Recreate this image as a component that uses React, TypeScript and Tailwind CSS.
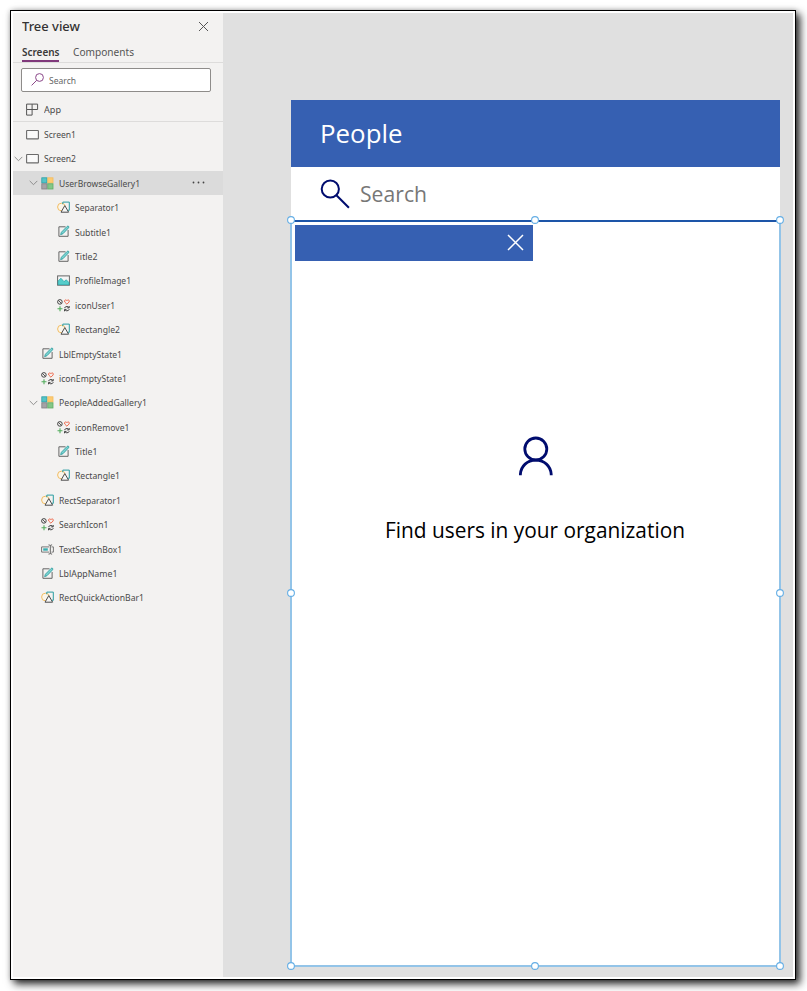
import React from "react";

type Kind = "app" | "screen" | "gallery" | "shape" | "label" | "image" | "icons" | "input";

interface Node {
  name: string;
  kind: Kind;
  depth: 0 | 1 | 2;
  open?: boolean;
  selected?: boolean;
  ruled?: boolean;
  width: string;
}

const nodes: Node[] = [
  { name: "App", kind: "app", depth: 0, ruled: true, width: "w-[17px]" },
  { name: "Screen1", kind: "screen", depth: 0, width: "w-[32px]" },
  { name: "Screen2", kind: "screen", depth: 0, open: true, width: "w-[32px]" },
  { name: "UserBrowseGallery1", kind: "gallery", depth: 1, open: true, selected: true, width: "w-[81px]" },
  { name: "Separator1", kind: "shape", depth: 2, width: "w-[44px]" },
  { name: "Subtitle1", kind: "label", depth: 2, width: "w-[36px]" },
  { name: "Title2", kind: "label", depth: 2, width: "w-[22.5px]" },
  { name: "ProfileImage1", kind: "image", depth: 2, width: "w-[56px]" },
  { name: "iconUser1", kind: "icons", depth: 2, width: "w-[40px]" },
  { name: "Rectangle2", kind: "shape", depth: 2, width: "w-[45px]" },
  { name: "LblEmptyState1", kind: "label", depth: 1, width: "w-[63px]" },
  { name: "iconEmptyState1", kind: "icons", depth: 1, width: "w-[68px]" },
  { name: "PeopleAddedGallery1", kind: "gallery", depth: 1, open: true, width: "w-[88px]" },
  { name: "iconRemove1", kind: "icons", depth: 2, width: "w-[54.5px]" },
  { name: "Title1", kind: "label", depth: 2, width: "w-[22.5px]" },
  { name: "Rectangle1", kind: "shape", depth: 2, width: "w-[45px]" },
  { name: "RectSeparator1", kind: "shape", depth: 1, width: "w-[62px]" },
  { name: "SearchIcon1", kind: "icons", depth: 1, width: "w-[49.5px]" },
  { name: "TextSearchBox1", kind: "input", depth: 1, width: "w-[63px]" },
  { name: "LblAppName1", kind: "label", depth: 1, width: "w-[58.5px]" },
  { name: "RectQuickActionBar1", kind: "shape", depth: 1, width: "w-[85px]" },
];

const indent = { 0: "pl-0", 1: "pl-[15.3px]", 2: "pl-[30.6px]" };

function NodeIcon({ kind }: { kind: Kind }) {
  return (
    <svg className="h-[13px] w-[13px] shrink-0" viewBox="0 0 13 13" fill="none">
      {kind === "app" && (
        <path d="M.6 1.1h11v5.4H.6zM6.1 1.1v11H.6V6.5" stroke="#555" strokeWidth="1" />
      )}
      {kind === "screen" && <rect x=".6" y="2.5" width="11.8" height="8.4" rx=".5" fill="#fafafa" stroke="#6b6b6b" strokeWidth="1.1" />}
      {kind === "gallery" && (
        <>
          <rect x=".8" y=".8" width="5.2" height="5.2" fill="#55c4c6" stroke="#2a9ea3" strokeWidth=".8" />
          <rect x="6.8" y=".8" width="5.2" height="5.2" fill="#fdcb72" stroke="#f3bb5e" strokeWidth=".8" />
          <rect x=".8" y="6.8" width="5.2" height="5.2" fill="#a5a3a6" stroke="#838186" strokeWidth=".8" />
          <rect x="6.8" y="6.8" width="5.2" height="5.2" fill="#84c787" stroke="#5fac64" strokeWidth=".8" />
        </>
      )}
      {kind === "shape" && (
        <>
          <circle cx="4.4" cy="6" r="3.8" fill="#faf5ea" stroke="#f2bd62" />
          <path d="M5.8 3.2V1.1h6.5v8.2h-1.5" stroke="#299da2" />
          <path d="M7.8 4.6 11.6 11.2H4z" fill="#f7f7f7" stroke="#4c4c4c" strokeLinejoin="round" />
        </>
      )}
      {kind === "label" && (
        <>
          <path d="M8.5 1.8H1.9v9.5h9.2V5" stroke="#666" />
          <path d="m3.6 9.7.8-2.5L10 1.5q1-.8 1.6-.2t-.1 1.6L6 8.7z" fill="#7bd3d2" stroke="#2a9899" strokeWidth=".8" />
        </>
      )}
      {kind === "image" && (
        <>
          <rect x=".6" y="1.9" width="11.8" height="9.3" fill="#f5f5f5" stroke="#666" />
          <path d="M1.1 7 3.9 4.2 7 7.6l2.3-1.8L12 8.6v2.1H1.1z" fill="#55cdca" stroke="#21a4a8" strokeWidth=".7" />
        </>
      )}
      {kind === "icons" && (
        <>
          <circle cx="2.9" cy="2.9" r="2.3" stroke="#444" />
          <path d="m1.3 1.3 3.2 3.2" stroke="#444" strokeWidth=".9" />
          <path d="M9.9 5.2 7.7 3Q7.1 1 8.7 .9q.9 0 1.2.8.4-.8 1.3-.8 1.5.1 1 2z" stroke="#ef6a4d" />
          <path d="M3 7.2v5M.5 9.7h5" stroke="#52ac5c" strokeWidth="1.1" />
          <path d="M7.5 9.1q.5-1.6 2.5-1.6 1.2.1 1.9 1M12.2 7v1.9h-2M12.3 10.2q-.6 1.7-2.5 1.6-1.1 0-1.8-.9M7.5 12.3v-1.9h2" stroke="#444" strokeWidth="1" />
        </>
      )}
      {kind === "input" && (
        <>
          <path d="M8 3.9H.6v5.2H8M10.5 3.9h1.9v5.2h-1.9" stroke="#777" />
          <path d="M2.2 5.3h4.6v2.4H2.2z" fill="#39aeb0" />
          <path d="M7.5 1.9q1.8 0 1.8.8v7.6q0 .8-1.8.8M11.1 1.9q-1.8 0-1.8.8M9.3 10.3q0 .8 1.8.8" stroke="#555" strokeWidth=".9" />
        </>
      )}
    </svg>
  );
}

function FittedText({ text, width, size }: { text: string; width: string; size: string }) {
  const ref = React.useRef<HTMLSpanElement>(null);
  const [scale, setScale] = React.useState(1);
  React.useLayoutEffect(() => {
    const el = ref.current;
    if (el && el.parentElement) {
      const available = el.parentElement.getBoundingClientRect().width;
      const range = document.createRange();
      range.selectNodeContents(el);
      const natural = range.getBoundingClientRect().width;
      if (natural > 0) setScale((s) => (available / natural) * s);
    }
  }, [text]);
  return (
    <span className={`block shrink-0 whitespace-nowrap ${width} ${size}`}>
      <span ref={ref} className="inline-block origin-left" style={{ transform: `scaleX(${scale})` }}>
        {text}
      </span>
    </span>
  );
}

function TreeRow({ node }: { node: Node }) {
  return (
    <div
      className={`flex h-[24.4px] items-center ${indent[node.depth]} ${node.selected ? "bg-[#dbdbdb]" : ""} ${
        node.ruled ? "border-b border-[#dddcdb]" : ""
      }`}
    >
      <span className="flex w-[13px] shrink-0 pl-px">
        {node.open && (
          <svg className="h-[6px] w-[9px]" viewBox="0 0 9 6" fill="none">
            <path d="m.7.9 3.8 3.8L8.3.9" stroke="#858585" strokeWidth=".9" />
          </svg>
        )}
      </span>
      <NodeIcon kind={node.kind} />
      <span className="ml-[5px] pt-[1.6px] text-[#4a4a4a]">
        <FittedText text={node.name} width={node.width} size="text-[9.6px]" />
      </span>
      {node.selected && (
        <svg className="mr-[18px] mb-[2px] ml-auto h-[3px] w-[13px]" viewBox="0 0 13 3" fill="#444">
          <circle cx="1.5" cy="1.5" r=".9" />
          <circle cx="6.5" cy="1.5" r=".9" />
          <circle cx="11.5" cy="1.5" r=".9" />
        </svg>
      )}
    </div>
  );
}

function Sidebar() {
  return (
    <aside className="w-[210px] shrink-0 bg-[#f3f2f1] font-['Noto_Sans',sans-serif]">
      <div className="flex h-[28px] items-center justify-between pr-[14px] pl-[8.5px] text-[#333]">
        <span className="pb-[2px] font-medium">
          <FittedText text="Tree view" width="w-[58px]" size="text-[13.4px]" />
        </span>
        <svg className="mt-[-2px] h-[11px] w-[11px]" viewBox="0 0 11 11" fill="none">
          <path d="m1 1 9 9M10 1l-9 9" stroke="#555" strokeWidth="1" />
        </svg>
      </div>
      <div className="flex h-[22px] items-end gap-[13.5px] border-b border-[#dddcdb] pl-[8.5px]">
        <span className="flex h-[21px] items-center border-b-2 border-[#80397b] pt-[4px] font-semibold">
          <span className="text-[#3b3a39]">
            <FittedText text="Screens" width="w-[37.5px]" size="text-[10.8px]" />
          </span>
        </span>
        <span className="flex h-[21px] items-center pt-[2px] text-[#555]">
          <FittedText text="Components" width="w-[61px]" size="text-[10.8px]" />
        </span>
      </div>
      <div className="mt-[5px] ml-[8px] flex h-[24px] w-[190px] items-center rounded-[2px] border border-[#8e8c8a] bg-white pl-[9px] text-[#666]">
        <svg className="mr-[5px] mb-[2px] h-[13px] w-[13px]" viewBox="0 0 13 13" fill="none">
          <circle cx="8.5" cy="4.5" r="3.9" stroke="#8b4789" strokeWidth="1" />
          <path d="M5.7 7.3.6 12.4" stroke="#8b4789" strokeWidth="1" />
        </svg>
        <span className="pt-[2px]">
          <FittedText text="Search" width="w-[27px]" size="text-[9.6px]" />
        </span>
      </div>
      <div className="mt-[5.8px]">
        {nodes.map((n) => (
          <TreeRow key={n.name} node={n} />
        ))}
      </div>
    </aside>
  );
}

const handles = [
  "left-0 top-0",
  "left-1/2 top-0",
  "left-full top-0",
  "left-0 top-1/2",
  "left-full top-1/2",
  "left-0 top-full",
  "left-1/2 top-full",
  "left-full top-full",
];

function Gallery() {
  return (
    <section className="relative h-[746px] border-t-2 border-[#1d55a8] bg-white">
      <div className="mt-[3px] ml-[4px] flex h-[36px] w-[238px] items-center justify-end bg-[#3660b2] pr-[9px]">
        <svg className="mb-px h-[17px] w-[17px]" viewBox="0 0 17 17" fill="none">
          <path d="m1 1 15 15M16 1 1 16" stroke="#fff" strokeWidth="1.5" />
        </svg>
      </div>
      <div className="mt-[175px] flex flex-col items-center">
        <svg className="h-[40px] w-[36px]" viewBox="0 0 36 40" fill="none" stroke="#000c6e" strokeWidth="2.8">
          <circle cx="17.8" cy="13" r="11" />
          <path d="M2.4 39.2v-1C3 30 9.2 24.2 17.800 24.200S32.600 30 33.200 38.200v1" />
        </svg>
        <div className="mt-[39px] pr-px text-black">
          <FittedText text="Find users in your organization" width="w-[300px]" size="text-[21.3px] leading-[30px]" />
        </div>
      </div>
      <div className="pointer-events-none absolute -top-[2px] right-[.5px] bottom-0 left-0">
        <div className="absolute inset-y-0 -left-px w-[2px] bg-[#93c4e8]" />
        <div className="absolute inset-y-0 -right-px w-[2px] bg-[#93c4e8]" />
        <div className="absolute inset-x-0 -bottom-px h-[2px] bg-[#93c4e8]" />
        {handles.map((h) => (
          <svg key={h} className={`absolute h-[9px] w-[9px] -translate-x-1/2 -translate-y-1/2 ${h}`} viewBox="0 0 9 9">
            <circle cx="4.5" cy="4.5" r="3.4" fill="#fff" stroke="#64aee5" strokeWidth="1.1" />
          </svg>
        ))}
      </div>
    </section>
  );
}

export default function App() {
  return (
    <div className="h-[991px] w-[807px] overflow-hidden bg-white p-[10px]">
      <div className="flex h-[970px] w-[786px] border border-black bg-white p-[2px] shadow-[4px_4px_8px_0px_rgba(0,0,0,0.85),0px_0px_5px_0px_rgba(0,0,0,0.2)]">
        <Sidebar />
        <main className="flex flex-1 justify-end bg-[#e0e0e0] pt-[87px] pr-[13px]">
          <div className="w-[489px] font-['Open_Sans',sans-serif]">
            <header className="flex h-[67px] items-center bg-[#3660b2] pl-[28.5px] text-white">
              <FittedText text="People" width="w-[82.5px]" size="text-[26px]" />
            </header>
            <div className="flex h-[53px] items-center bg-white pl-[29px] text-[#777]">
              <svg className="mr-[10px] h-[30px] w-[30px]" viewBox="0 0 30 30" fill="none" stroke="#000c6e" strokeWidth="2">
                <circle cx="10.3" cy="10" r="8.6" />
                <path d="M16.4 16.2 28.9 28.7" />
              </svg>
              <FittedText text="Search" width="w-[67px]" size="text-[21.3px]" />
            </div>
            <Gallery />
          </div>
        </main>
      </div>
    </div>
  );
}
